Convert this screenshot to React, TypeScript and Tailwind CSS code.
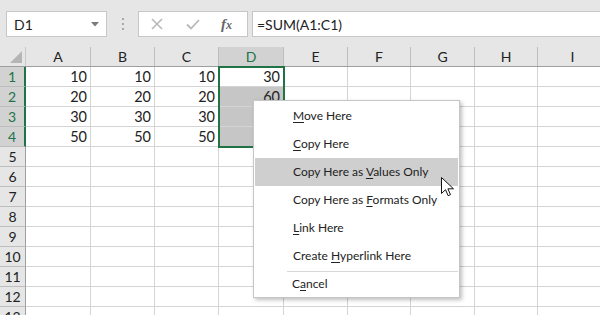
import { ReactNode } from 'react'

const cols = [
  { name: 'A', w: 'w-[65px]' },
  { name: 'B', w: 'w-[64px]' },
  { name: 'C', w: 'w-[64px]' },
  { name: 'D', w: 'w-[65px]' },
  { name: 'E', w: 'w-[64px]' },
  { name: 'F', w: 'w-[63px]' },
  { name: 'G', w: 'w-[64px]' },
  { name: 'H', w: 'w-[63px]' },
  { name: 'I', w: 'w-[70px]' },
]

const data: Record<number, (number | null)[]> = {
  1: [10, 10, 10, 30],
  2: [20, 20, 20, 60],
  3: [30, 30, 30, null],
  4: [50, 50, 50, null],
}

const rows = Array.from({ length: 13 }, (_, i) => i + 1)

function Key({ children }: { children: ReactNode }) {
  return <span className="underline underline-offset-2">{children}</span>
}

const menu: { label: ReactNode; active?: boolean }[] = [
  { label: <><Key>M</Key>ove Here</> },
  { label: <><Key>C</Key>opy Here</> },
  { label: <>Copy Here as <Key>V</Key>alues Only</>, active: true },
  { label: <>Copy Here as <Key>F</Key>ormats Only</> },
  { label: <><Key>L</Key>ink Here</> },
  { label: <>Create <Key>H</Key>yperlink Here</> },
]

export default function App() {
  return (
    <div className="w-[600px] h-[315px] overflow-hidden bg-white relative font-['Lato',sans-serif] text-[#222]">
      {/* toolbar */}
      <div className="h-[47px] bg-[#e6e6e6] flex items-center pl-[6px] pt-[1px]">
        <div className="w-[101px] h-[26px] bg-white border border-[#c6c6c6] flex items-center justify-between pl-[7px] pr-[7px] text-[14px]">
          <span>D1</span>
          <svg width="8" height="5" viewBox="0 0 8 5"><path d="M0 0h8L4 4.5z" fill="#7a7a7a" /></svg>
        </div>
        <div className="w-[31px] flex flex-col items-center gap-[3px]">
          <span className="w-[2px] h-[2px] bg-[#a8a8a8]" />
          <span className="w-[2px] h-[2px] bg-[#a8a8a8]" />
          <span className="w-[2px] h-[2px] bg-[#a8a8a8]" />
        </div>
        <div className="w-[110px] h-[26px] bg-white border border-[#c6c6c6] flex items-center">
          <svg className="ml-[12px]" width="12" height="12" viewBox="0 0 12 12"><path d="M1 1l10 10M11 1L1 11" stroke="#b8b8b8" strokeWidth="1.6" /></svg>
          <svg className="ml-[23px]" width="14" height="11" viewBox="0 0 14 11"><path d="M1 5.5l4 4L13 1" stroke="#b8b8b8" strokeWidth="1.8" fill="none" /></svg>
          <span className="ml-[21px] text-[15px] italic font-bold text-[#666] font-['Liberation_Serif',serif]">f<span className="text-[12px]">x</span></span>
        </div>
        <div className="ml-[4px] flex-1 h-[26px] bg-white border border-[#c6c6c6] border-r-0 flex items-center pl-[4px] text-[14px]">
          =SUM(A1:C1)
        </div>
      </div>

      {/* grid */}
      <div className="relative">
        <div className="flex h-[20px] bg-[#e6e6e6] border-b border-[#9e9e9e]">
          <div className="w-[26px] shrink-0 border-r border-[#c8c8c8] flex items-end justify-end pr-[3px] pb-[3px]">
            <svg width="12" height="12" viewBox="0 0 12 12"><path d="M12 0v12H0z" fill="#b5b5b5" /></svg>
          </div>
          {cols.map((c) => (
            <div
              key={c.name}
              className={`${c.w} shrink-0 border-r border-[#bdbdbd] flex items-center justify-center text-[14px] ${c.name === 'D' ? 'bg-[#d2d2d2] text-[#217346]' : ''}`}
            >
              {c.name}
            </div>
          ))}
        </div>
        {rows.map((r) => (
          <div key={r} className="flex h-[20px]">
            <div
              className={`w-[26px] shrink-0 border-b border-[#bdbdbd] flex items-center justify-center text-[14px] ${r <= 4 ? 'bg-[#d2d2d2] border-r-2 border-r-[#217346] text-[#217346]' : 'bg-[#e6e6e6] border-r border-r-[#9e9e9e]'}`}
            >
              {r}
            </div>
            {cols.map((c, i) => {
              const v = data[r]?.[i]
              const sel = c.name === 'D' && r >= 2 && r <= 4
              return (
                <div
                  key={c.name}
                  className={`${c.w} shrink-0 border-r border-b border-[#d4d4d4] flex items-center justify-end pr-[3px] text-[14.5px] ${sel ? 'bg-[#c6c6c6]' : ''}`}
                >
                  {v ?? ''}
                </div>
              )
            })}
          </div>
        ))}

        {/* selection border D1:D4 */}
        <div className="absolute left-[218px] top-[19px] w-[67px] h-[82px] border-2 border-[#217346] pointer-events-none" />
      </div>

      {/* context menu */}
      <div className="absolute left-[253px] top-[100px] w-[207px] bg-white border border-[#c6c6c6] shadow-[2px_2px_4px_rgba(0,0,0,0.25)] py-[1px] font-['Lato',sans-serif] text-[12px] text-[#222]">
        {menu.map((m, i) => (
          <div
            key={i}
            className={`h-[28px] flex items-center pl-[38px] mx-[1px] ${m.active ? 'bg-[#cfcfcf]' : ''}`}
          >
            <span>{m.label}</span>
          </div>
        ))}
        <div className="h-[1px] bg-[#d7d7d7] ml-[33px] mr-[1px] my-[1px]" />
        <div className="h-[23px] flex items-center pl-[38px] pb-[2px]">
          <span>C<Key>a</Key>ncel</span>
        </div>
      </div>

      {/* mouse cursor */}
      <svg className="absolute left-[441px] top-[177px]" width="13" height="20" viewBox="0 0 13 20">
        <path d="M0.5 0.5v16l4-3.8 2.6 6 2.4-1-2.6-5.9h5.6z" fill="white" stroke="#111" strokeWidth="1" strokeLinejoin="round" />
      </svg>
    </div>
  )
}
